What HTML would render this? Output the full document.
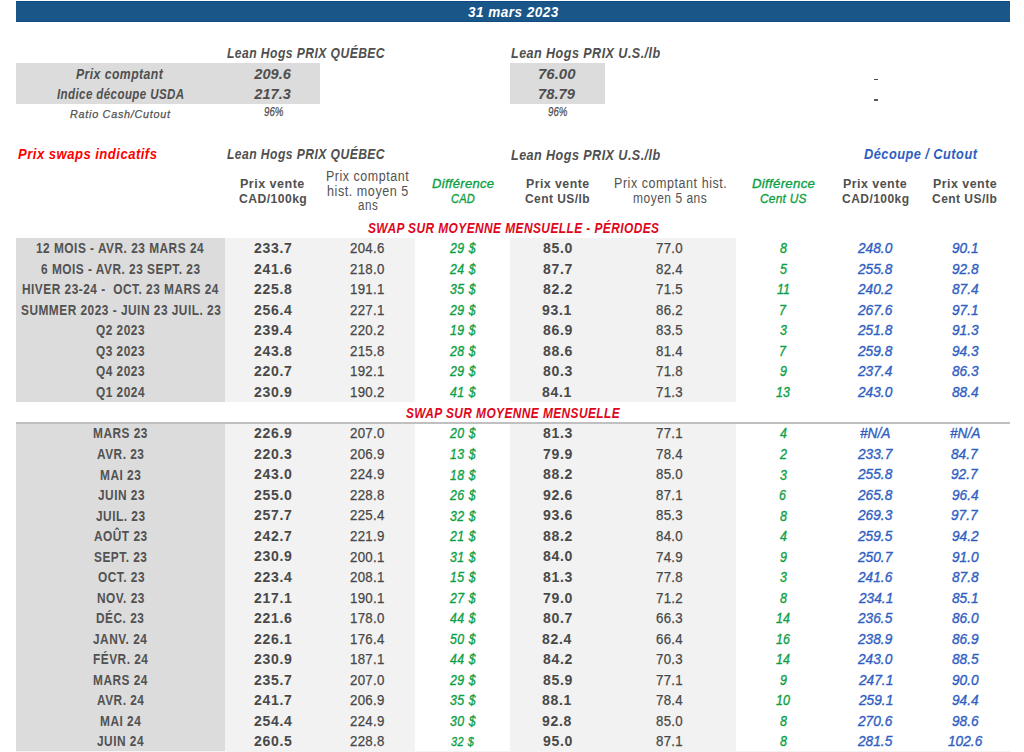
<!DOCTYPE html>
<html><head><meta charset="utf-8"><title>Prix swaps indicatifs</title>
<style>
html,body{margin:0;padding:0;background:#fff;width:1024px;height:752px;overflow:hidden;position:relative}
.r{position:absolute}
.t{position:absolute;white-space:nowrap;line-height:20px;font-family:"Liberation Sans", sans-serif;transform-origin:0 50%}
</style></head><body>
<div class="r" style="left:16px;top:1px;width:994.00px;height:21.00px;background:#1b5688"></div>
<div class="r" style="left:16px;top:1px;width:994.00px;height:1.20px;background:#0b4a82"></div>
<div class="r" style="left:16px;top:20.8px;width:994.00px;height:1.20px;background:#104c84"></div>
<div class="r" style="left:16px;top:63.2px;width:304.00px;height:40.40px;background:#dcdcdc"></div>
<div class="r" style="left:510px;top:63.2px;width:95.00px;height:40.40px;background:#dcdcdc"></div>
<div class="r" style="left:873.6px;top:79px;width:4.00px;height:1.30px;background:#4a4a4a"></div>
<div class="r" style="left:873.6px;top:99.4px;width:4.00px;height:1.30px;background:#5a5a5a"></div>
<div class="r" style="left:16px;top:237.7px;width:209.00px;height:164.00px;background:#dcdcdc"></div>
<div class="r" style="left:225px;top:237.7px;width:190.00px;height:164.00px;background:#f2f2f2"></div>
<div class="r" style="left:510px;top:237.7px;width:225.70px;height:164.00px;background:#f2f2f2"></div>
<div class="r" style="left:16px;top:422.1px;width:209.00px;height:328.60px;background:#dcdcdc"></div>
<div class="r" style="left:225px;top:422.1px;width:190.00px;height:328.60px;background:#f2f2f2"></div>
<div class="r" style="left:510px;top:422.1px;width:225.70px;height:328.60px;background:#f2f2f2"></div>
<div class="r" style="left:16px;top:422.1px;width:994.00px;height:1.50px;background:#c0c0c0"></div>
<div class="r" style="left:16px;top:750.7px;width:994.00px;height:1.30px;background:#f3f3f3"></div>
<div class="t" style="left:467.60px;top:2.24px;font-size:14.6px;color:#ffffff;font-weight:700;font-style:italic;letter-spacing:0.5px;transform:scaleX(0.9289);">31 mars 2023</div>
<div class="t" style="left:226.70px;top:43.25px;font-size:14.0px;color:#4f4f4f;font-weight:700;font-style:italic;letter-spacing:0.5px;transform:scaleX(0.8665);">Lean Hogs PRIX QUÉBEC</div>
<div class="t" style="left:511.30px;top:43.25px;font-size:14.0px;color:#4f4f4f;font-weight:700;font-style:italic;letter-spacing:0.5px;transform:scaleX(0.8982);">Lean Hogs PRIX U.S./lb</div>
<div class="t" style="left:76.00px;top:63.88px;font-size:14.2px;color:#4f4f4f;font-weight:700;font-style:italic;letter-spacing:0.5px;transform:scaleX(0.8627);">Prix comptant</div>
<div class="t" style="left:57.00px;top:84.28px;font-size:14.2px;color:#4f4f4f;font-weight:700;font-style:italic;letter-spacing:0.5px;transform:scaleX(0.8125);">Indice découpe USDA</div>
<div class="t" style="left:254.30px;top:63.94px;font-size:14.6px;color:#4f4f4f;font-weight:700;font-style:italic;">209.6</div>
<div class="t" style="left:254.30px;top:84.34px;font-size:14.6px;color:#4f4f4f;font-weight:700;font-style:italic;">217.3</div>
<div class="t" style="left:537.97px;top:63.94px;font-size:14.6px;color:#4f4f4f;font-weight:700;font-style:italic;transform:scaleX(1.0278);">76.00</div>
<div class="t" style="left:538.49px;top:84.34px;font-size:14.6px;color:#4f4f4f;font-weight:700;font-style:italic;transform:scaleX(1.0139);">78.79</div>
<div class="t" style="left:70.00px;top:103.71px;font-size:11.8px;color:#4f4f4f;font-style:italic;-webkit-text-stroke:0.25px #4f4f4f;letter-spacing:0.8px;transform:scaleX(0.9155);">Ratio Cash/Cutout</div>
<div class="t" style="left:263.70px;top:101.90px;font-size:13.0px;color:#4f4f4f;font-style:italic;-webkit-text-stroke:0.25px #4f4f4f;transform:scaleX(0.7500);">96%</div>
<div class="t" style="left:548.30px;top:101.90px;font-size:13.0px;color:#4f4f4f;font-style:italic;-webkit-text-stroke:0.25px #4f4f4f;transform:scaleX(0.7462);">96%</div>
<div class="t" style="left:17.50px;top:144.35px;font-size:14.0px;color:#ff0000;font-weight:700;font-style:italic;letter-spacing:0.5px;transform:scaleX(0.9358);">Prix swaps indicatifs</div>
<div class="t" style="left:226.70px;top:144.45px;font-size:14.0px;color:#4f4f4f;font-weight:700;font-style:italic;letter-spacing:0.5px;transform:scaleX(0.8665);">Lean Hogs PRIX QUÉBEC</div>
<div class="t" style="left:511.30px;top:144.65px;font-size:14.0px;color:#4f4f4f;font-weight:700;font-style:italic;letter-spacing:0.5px;transform:scaleX(0.8982);">Lean Hogs PRIX U.S./lb</div>
<div class="t" style="left:863.50px;top:144.25px;font-size:14.0px;color:#2f5ec2;font-weight:700;font-style:italic;letter-spacing:0.5px;transform:scaleX(0.9153);">Découpe / Cutout</div>
<div class="t" style="left:240.47px;top:174.19px;font-size:13.6px;color:#505050;font-weight:700;letter-spacing:0.5px;transform:scaleX(0.9250);">Prix vente</div>
<div class="t" style="left:239.20px;top:188.89px;font-size:13.6px;color:#505050;font-weight:700;letter-spacing:0.5px;transform:scaleX(0.8947);">CAD/100kg</div>
<div class="t" style="left:325.50px;top:167.22px;font-size:13.8px;color:#525252;letter-spacing:0.6px;transform:scaleX(0.9022);">Prix comptant</div>
<div class="t" style="left:326.59px;top:181.82px;font-size:13.8px;color:#525252;letter-spacing:0.6px;transform:scaleX(0.9114);">hist. moyen 5</div>
<div class="t" style="left:358.10px;top:196.22px;font-size:13.8px;color:#525252;letter-spacing:0.6px;transform:scaleX(0.8391);">ans</div>
<div class="t" style="left:431.70px;top:173.99px;font-size:13.6px;color:#0ca044;font-style:italic;-webkit-text-stroke:0.35px #0ca044;letter-spacing:0.3px;transform:scaleX(0.9609);">Différence</div>
<div class="t" style="left:450.70px;top:189.19px;font-size:13.6px;color:#0ca044;font-style:italic;-webkit-text-stroke:0.35px #0ca044;letter-spacing:0.3px;transform:scaleX(0.8103);">CAD</div>
<div class="t" style="left:525.69px;top:174.19px;font-size:13.6px;color:#505050;font-weight:700;letter-spacing:0.5px;transform:scaleX(0.9074);">Prix vente</div>
<div class="t" style="left:525.30px;top:188.89px;font-size:13.6px;color:#505050;font-weight:700;letter-spacing:0.5px;transform:scaleX(0.8808);">Cent US/lb</div>
<div class="t" style="left:613.79px;top:174.12px;font-size:13.8px;color:#525252;letter-spacing:0.6px;transform:scaleX(0.9074);">Prix comptant hist.</div>
<div class="t" style="left:633.13px;top:188.82px;font-size:13.8px;color:#525252;letter-spacing:0.6px;transform:scaleX(0.8679);">moyen 5 ans</div>
<div class="t" style="left:752.00px;top:173.99px;font-size:13.6px;color:#0ca044;font-style:italic;-webkit-text-stroke:0.35px #0ca044;letter-spacing:0.3px;transform:scaleX(0.9734);">Différence</div>
<div class="t" style="left:760.20px;top:189.19px;font-size:13.6px;color:#0ca044;font-style:italic;-webkit-text-stroke:0.35px #0ca044;letter-spacing:0.3px;transform:scaleX(0.8755);">Cent US</div>
<div class="t" style="left:843.48px;top:174.19px;font-size:13.6px;color:#505050;font-weight:700;letter-spacing:0.5px;transform:scaleX(0.9162);">Prix vente</div>
<div class="t" style="left:842.20px;top:188.89px;font-size:13.6px;color:#505050;font-weight:700;letter-spacing:0.5px;transform:scaleX(0.8853);">CAD/100kg</div>
<div class="t" style="left:932.88px;top:174.19px;font-size:13.6px;color:#505050;font-weight:700;letter-spacing:0.5px;transform:scaleX(0.9162);">Prix vente</div>
<div class="t" style="left:932.40px;top:188.89px;font-size:13.6px;color:#505050;font-weight:700;letter-spacing:0.5px;transform:scaleX(0.8849);">Cent US/lb</div>
<div class="t" style="left:367.50px;top:217.95px;font-size:14.0px;color:#e0061c;font-weight:700;font-style:italic;letter-spacing:0.5px;transform:scaleX(0.8512);">SWAP SUR MOYENNE MENSUELLE - PÉRIODES</div>
<div class="t" style="left:36.07px;top:238.18px;font-size:14.2px;color:#525252;font-weight:700;letter-spacing:0.6px;transform:scaleX(0.8360);">12 MOIS - AVR. 23 MARS 24</div>
<div class="t" style="left:254.03px;top:238.04px;font-size:14.6px;color:#494949;font-weight:700;letter-spacing:0.7px;transform:scaleX(0.9627);">233.7</div>
<div class="t" style="left:350.45px;top:238.11px;font-size:14.4px;color:#474747;-webkit-text-stroke:0.25px #474747;letter-spacing:0.3px;transform:scaleX(0.9217);">204.6</div>
<div class="t" style="left:449.70px;top:238.18px;font-size:14.2px;color:#0ca044;font-style:italic;-webkit-text-stroke:0.35px #0ca044;letter-spacing:0.6px;transform:scaleX(0.8667);">29 $</div>
<div class="t" style="left:542.86px;top:238.04px;font-size:14.6px;color:#494949;font-weight:700;letter-spacing:0.7px;transform:scaleX(0.9627);">85.0</div>
<div class="t" style="left:656.44px;top:238.11px;font-size:14.4px;color:#474747;-webkit-text-stroke:0.25px #474747;letter-spacing:0.3px;transform:scaleX(0.9217);">77.0</div>
<div class="t" style="left:779.69px;top:238.18px;font-size:14.2px;color:#0ca044;font-style:italic;-webkit-text-stroke:0.35px #0ca044;transform:scaleX(0.8781);">8</div>
<div class="t" style="left:858.38px;top:238.11px;font-size:14.4px;color:#2f5ec2;font-style:italic;-webkit-text-stroke:0.35px #2f5ec2;transform:scaleX(0.9513);">248.0</div>
<div class="t" style="left:952.36px;top:238.11px;font-size:14.4px;color:#2f5ec2;font-style:italic;-webkit-text-stroke:0.35px #2f5ec2;transform:scaleX(0.9513);">90.1</div>
<div class="t" style="left:41.08px;top:258.70px;font-size:14.2px;color:#525252;font-weight:700;letter-spacing:0.6px;transform:scaleX(0.8360);">6 MOIS - AVR. 23 SEPT. 23</div>
<div class="t" style="left:254.03px;top:258.56px;font-size:14.6px;color:#494949;font-weight:700;letter-spacing:0.7px;transform:scaleX(0.9627);">241.6</div>
<div class="t" style="left:350.45px;top:258.63px;font-size:14.4px;color:#474747;-webkit-text-stroke:0.25px #474747;letter-spacing:0.3px;transform:scaleX(0.9217);">218.0</div>
<div class="t" style="left:449.70px;top:258.70px;font-size:14.2px;color:#0ca044;font-style:italic;-webkit-text-stroke:0.35px #0ca044;letter-spacing:0.6px;transform:scaleX(0.8667);">24 $</div>
<div class="t" style="left:542.86px;top:258.56px;font-size:14.6px;color:#494949;font-weight:700;letter-spacing:0.7px;transform:scaleX(0.9627);">87.7</div>
<div class="t" style="left:656.44px;top:258.63px;font-size:14.4px;color:#474747;-webkit-text-stroke:0.25px #474747;letter-spacing:0.3px;transform:scaleX(0.9217);">82.4</div>
<div class="t" style="left:779.69px;top:258.70px;font-size:14.2px;color:#0ca044;font-style:italic;-webkit-text-stroke:0.35px #0ca044;transform:scaleX(0.8781);">5</div>
<div class="t" style="left:858.38px;top:258.63px;font-size:14.4px;color:#2f5ec2;font-style:italic;-webkit-text-stroke:0.35px #2f5ec2;transform:scaleX(0.9513);">255.8</div>
<div class="t" style="left:951.88px;top:258.63px;font-size:14.4px;color:#2f5ec2;font-style:italic;-webkit-text-stroke:0.35px #2f5ec2;transform:scaleX(0.9513);">92.8</div>
<div class="t" style="left:21.86px;top:279.22px;font-size:14.2px;color:#525252;font-weight:700;letter-spacing:0.6px;transform:scaleX(0.8360);">HIVER 23-24 -&nbsp; OCT. 23 MARS 24</div>
<div class="t" style="left:254.03px;top:279.08px;font-size:14.6px;color:#494949;font-weight:700;letter-spacing:0.7px;transform:scaleX(0.9627);">225.8</div>
<div class="t" style="left:349.99px;top:279.15px;font-size:14.4px;color:#474747;-webkit-text-stroke:0.25px #474747;letter-spacing:0.3px;transform:scaleX(0.9217);">191.1</div>
<div class="t" style="left:449.70px;top:279.22px;font-size:14.2px;color:#0ca044;font-style:italic;-webkit-text-stroke:0.35px #0ca044;letter-spacing:0.6px;transform:scaleX(0.8667);">35 $</div>
<div class="t" style="left:542.86px;top:279.08px;font-size:14.6px;color:#494949;font-weight:700;letter-spacing:0.7px;transform:scaleX(0.9627);">82.2</div>
<div class="t" style="left:656.44px;top:279.15px;font-size:14.4px;color:#474747;-webkit-text-stroke:0.25px #474747;letter-spacing:0.3px;transform:scaleX(0.9217);">71.5</div>
<div class="t" style="left:777.05px;top:279.22px;font-size:14.2px;color:#0ca044;font-style:italic;-webkit-text-stroke:0.35px #0ca044;transform:scaleX(0.8781);">11</div>
<div class="t" style="left:858.38px;top:279.15px;font-size:14.4px;color:#2f5ec2;font-style:italic;-webkit-text-stroke:0.35px #2f5ec2;transform:scaleX(0.9513);">240.2</div>
<div class="t" style="left:951.88px;top:279.15px;font-size:14.4px;color:#2f5ec2;font-style:italic;-webkit-text-stroke:0.35px #2f5ec2;transform:scaleX(0.9513);">87.4</div>
<div class="t" style="left:20.60px;top:299.74px;font-size:14.2px;color:#525252;font-weight:700;letter-spacing:0.6px;transform:scaleX(0.8360);">SUMMER 2023 - JUIN 23 JUIL. 23</div>
<div class="t" style="left:253.55px;top:299.60px;font-size:14.6px;color:#494949;font-weight:700;letter-spacing:0.7px;transform:scaleX(0.9627);">256.4</div>
<div class="t" style="left:350.45px;top:299.67px;font-size:14.4px;color:#474747;-webkit-text-stroke:0.25px #474747;letter-spacing:0.3px;transform:scaleX(0.9217);">227.1</div>
<div class="t" style="left:449.70px;top:299.74px;font-size:14.2px;color:#0ca044;font-style:italic;-webkit-text-stroke:0.35px #0ca044;letter-spacing:0.6px;transform:scaleX(0.8667);">29 $</div>
<div class="t" style="left:542.38px;top:299.60px;font-size:14.6px;color:#494949;font-weight:700;letter-spacing:0.7px;transform:scaleX(0.9627);">93.1</div>
<div class="t" style="left:656.44px;top:299.67px;font-size:14.4px;color:#474747;-webkit-text-stroke:0.25px #474747;letter-spacing:0.3px;transform:scaleX(0.9217);">86.2</div>
<div class="t" style="left:778.81px;top:299.74px;font-size:14.2px;color:#0ca044;font-style:italic;-webkit-text-stroke:0.35px #0ca044;transform:scaleX(0.8781);">7</div>
<div class="t" style="left:858.38px;top:299.67px;font-size:14.4px;color:#2f5ec2;font-style:italic;-webkit-text-stroke:0.35px #2f5ec2;transform:scaleX(0.9513);">267.6</div>
<div class="t" style="left:952.36px;top:299.67px;font-size:14.4px;color:#2f5ec2;font-style:italic;-webkit-text-stroke:0.35px #2f5ec2;transform:scaleX(0.9513);">97.1</div>
<div class="t" style="left:96.26px;top:320.26px;font-size:14.2px;color:#525252;font-weight:700;letter-spacing:0.6px;transform:scaleX(0.8360);">Q2 2023</div>
<div class="t" style="left:253.55px;top:320.12px;font-size:14.6px;color:#494949;font-weight:700;letter-spacing:0.7px;transform:scaleX(0.9627);">239.4</div>
<div class="t" style="left:350.45px;top:320.19px;font-size:14.4px;color:#474747;-webkit-text-stroke:0.25px #474747;letter-spacing:0.3px;transform:scaleX(0.9217);">220.2</div>
<div class="t" style="left:449.70px;top:320.26px;font-size:14.2px;color:#0ca044;font-style:italic;-webkit-text-stroke:0.35px #0ca044;letter-spacing:0.6px;transform:scaleX(0.8667);">19 $</div>
<div class="t" style="left:542.86px;top:320.12px;font-size:14.6px;color:#494949;font-weight:700;letter-spacing:0.7px;transform:scaleX(0.9627);">86.9</div>
<div class="t" style="left:656.44px;top:320.19px;font-size:14.4px;color:#474747;-webkit-text-stroke:0.25px #474747;letter-spacing:0.3px;transform:scaleX(0.9217);">83.5</div>
<div class="t" style="left:779.69px;top:320.26px;font-size:14.2px;color:#0ca044;font-style:italic;-webkit-text-stroke:0.35px #0ca044;transform:scaleX(0.8781);">3</div>
<div class="t" style="left:858.38px;top:320.19px;font-size:14.4px;color:#2f5ec2;font-style:italic;-webkit-text-stroke:0.35px #2f5ec2;transform:scaleX(0.9513);">251.8</div>
<div class="t" style="left:951.88px;top:320.19px;font-size:14.4px;color:#2f5ec2;font-style:italic;-webkit-text-stroke:0.35px #2f5ec2;transform:scaleX(0.9513);">91.3</div>
<div class="t" style="left:96.26px;top:340.78px;font-size:14.2px;color:#525252;font-weight:700;letter-spacing:0.6px;transform:scaleX(0.8360);">Q3 2023</div>
<div class="t" style="left:254.03px;top:340.64px;font-size:14.6px;color:#494949;font-weight:700;letter-spacing:0.7px;transform:scaleX(0.9627);">243.8</div>
<div class="t" style="left:350.45px;top:340.71px;font-size:14.4px;color:#474747;-webkit-text-stroke:0.25px #474747;letter-spacing:0.3px;transform:scaleX(0.9217);">215.8</div>
<div class="t" style="left:449.70px;top:340.78px;font-size:14.2px;color:#0ca044;font-style:italic;-webkit-text-stroke:0.35px #0ca044;letter-spacing:0.6px;transform:scaleX(0.8667);">28 $</div>
<div class="t" style="left:542.86px;top:340.64px;font-size:14.6px;color:#494949;font-weight:700;letter-spacing:0.7px;transform:scaleX(0.9627);">88.6</div>
<div class="t" style="left:656.44px;top:340.71px;font-size:14.4px;color:#474747;-webkit-text-stroke:0.25px #474747;letter-spacing:0.3px;transform:scaleX(0.9217);">81.4</div>
<div class="t" style="left:778.81px;top:340.78px;font-size:14.2px;color:#0ca044;font-style:italic;-webkit-text-stroke:0.35px #0ca044;transform:scaleX(0.8781);">7</div>
<div class="t" style="left:858.38px;top:340.71px;font-size:14.4px;color:#2f5ec2;font-style:italic;-webkit-text-stroke:0.35px #2f5ec2;transform:scaleX(0.9513);">259.8</div>
<div class="t" style="left:951.88px;top:340.71px;font-size:14.4px;color:#2f5ec2;font-style:italic;-webkit-text-stroke:0.35px #2f5ec2;transform:scaleX(0.9513);">94.3</div>
<div class="t" style="left:96.26px;top:361.30px;font-size:14.2px;color:#525252;font-weight:700;letter-spacing:0.6px;transform:scaleX(0.8360);">Q4 2023</div>
<div class="t" style="left:254.03px;top:361.16px;font-size:14.6px;color:#494949;font-weight:700;letter-spacing:0.7px;transform:scaleX(0.9627);">220.7</div>
<div class="t" style="left:349.99px;top:361.23px;font-size:14.4px;color:#474747;-webkit-text-stroke:0.25px #474747;letter-spacing:0.3px;transform:scaleX(0.9217);">192.1</div>
<div class="t" style="left:449.70px;top:361.30px;font-size:14.2px;color:#0ca044;font-style:italic;-webkit-text-stroke:0.35px #0ca044;letter-spacing:0.6px;transform:scaleX(0.8667);">29 $</div>
<div class="t" style="left:542.86px;top:361.16px;font-size:14.6px;color:#494949;font-weight:700;letter-spacing:0.7px;transform:scaleX(0.9627);">80.3</div>
<div class="t" style="left:656.44px;top:361.23px;font-size:14.4px;color:#474747;-webkit-text-stroke:0.25px #474747;letter-spacing:0.3px;transform:scaleX(0.9217);">71.8</div>
<div class="t" style="left:779.69px;top:361.30px;font-size:14.2px;color:#0ca044;font-style:italic;-webkit-text-stroke:0.35px #0ca044;transform:scaleX(0.8781);">9</div>
<div class="t" style="left:858.38px;top:361.23px;font-size:14.4px;color:#2f5ec2;font-style:italic;-webkit-text-stroke:0.35px #2f5ec2;transform:scaleX(0.9513);">237.4</div>
<div class="t" style="left:951.88px;top:361.23px;font-size:14.4px;color:#2f5ec2;font-style:italic;-webkit-text-stroke:0.35px #2f5ec2;transform:scaleX(0.9513);">86.3</div>
<div class="t" style="left:96.26px;top:381.82px;font-size:14.2px;color:#525252;font-weight:700;letter-spacing:0.6px;transform:scaleX(0.8360);">Q1 2024</div>
<div class="t" style="left:254.03px;top:381.68px;font-size:14.6px;color:#494949;font-weight:700;letter-spacing:0.7px;transform:scaleX(0.9627);">230.9</div>
<div class="t" style="left:349.99px;top:381.75px;font-size:14.4px;color:#474747;-webkit-text-stroke:0.25px #474747;letter-spacing:0.3px;transform:scaleX(0.9217);">190.2</div>
<div class="t" style="left:449.70px;top:381.82px;font-size:14.2px;color:#0ca044;font-style:italic;-webkit-text-stroke:0.35px #0ca044;letter-spacing:0.6px;transform:scaleX(0.8667);">41 $</div>
<div class="t" style="left:542.38px;top:381.68px;font-size:14.6px;color:#494949;font-weight:700;letter-spacing:0.7px;transform:scaleX(0.9627);">84.1</div>
<div class="t" style="left:656.44px;top:381.75px;font-size:14.4px;color:#474747;-webkit-text-stroke:0.25px #474747;letter-spacing:0.3px;transform:scaleX(0.9217);">71.3</div>
<div class="t" style="left:776.18px;top:381.82px;font-size:14.2px;color:#0ca044;font-style:italic;-webkit-text-stroke:0.35px #0ca044;transform:scaleX(0.8781);">13</div>
<div class="t" style="left:858.38px;top:381.75px;font-size:14.4px;color:#2f5ec2;font-style:italic;-webkit-text-stroke:0.35px #2f5ec2;transform:scaleX(0.9513);">243.0</div>
<div class="t" style="left:951.88px;top:381.75px;font-size:14.4px;color:#2f5ec2;font-style:italic;-webkit-text-stroke:0.35px #2f5ec2;transform:scaleX(0.9513);">88.4</div>
<div class="t" style="left:406.00px;top:402.95px;font-size:14.0px;color:#e0061c;font-weight:700;font-style:italic;letter-spacing:0.5px;transform:scaleX(0.8492);">SWAP SUR MOYENNE MENSUELLE</div>
<div class="t" style="left:92.91px;top:423.48px;font-size:14.2px;color:#525252;font-weight:700;letter-spacing:0.6px;transform:scaleX(0.8360);">MARS 23</div>
<div class="t" style="left:254.03px;top:423.34px;font-size:14.6px;color:#494949;font-weight:700;letter-spacing:0.7px;transform:scaleX(0.9627);">226.9</div>
<div class="t" style="left:350.45px;top:423.41px;font-size:14.4px;color:#474747;-webkit-text-stroke:0.25px #474747;letter-spacing:0.3px;transform:scaleX(0.9217);">207.0</div>
<div class="t" style="left:449.70px;top:423.48px;font-size:14.2px;color:#0ca044;font-style:italic;-webkit-text-stroke:0.35px #0ca044;letter-spacing:0.6px;transform:scaleX(0.8667);">20 $</div>
<div class="t" style="left:542.86px;top:423.34px;font-size:14.6px;color:#494949;font-weight:700;letter-spacing:0.7px;transform:scaleX(0.9627);">81.3</div>
<div class="t" style="left:656.44px;top:423.41px;font-size:14.4px;color:#474747;-webkit-text-stroke:0.25px #474747;letter-spacing:0.3px;transform:scaleX(0.9217);">77.1</div>
<div class="t" style="left:779.69px;top:423.48px;font-size:14.2px;color:#0ca044;font-style:italic;-webkit-text-stroke:0.35px #0ca044;transform:scaleX(0.8781);">4</div>
<div class="t" style="left:860.28px;top:423.41px;font-size:14.4px;color:#2f5ec2;font-style:italic;-webkit-text-stroke:0.35px #2f5ec2;transform:scaleX(0.9513);">#N/A</div>
<div class="t" style="left:949.98px;top:423.41px;font-size:14.4px;color:#2f5ec2;font-style:italic;-webkit-text-stroke:0.35px #2f5ec2;transform:scaleX(0.9513);">#N/A</div>
<div class="t" style="left:97.09px;top:444.00px;font-size:14.2px;color:#525252;font-weight:700;letter-spacing:0.6px;transform:scaleX(0.8360);">AVR. 23</div>
<div class="t" style="left:254.03px;top:443.86px;font-size:14.6px;color:#494949;font-weight:700;letter-spacing:0.7px;transform:scaleX(0.9627);">220.3</div>
<div class="t" style="left:350.45px;top:443.93px;font-size:14.4px;color:#474747;-webkit-text-stroke:0.25px #474747;letter-spacing:0.3px;transform:scaleX(0.9217);">206.9</div>
<div class="t" style="left:449.70px;top:444.00px;font-size:14.2px;color:#0ca044;font-style:italic;-webkit-text-stroke:0.35px #0ca044;letter-spacing:0.6px;transform:scaleX(0.8667);">13 $</div>
<div class="t" style="left:542.86px;top:443.86px;font-size:14.6px;color:#494949;font-weight:700;letter-spacing:0.7px;transform:scaleX(0.9627);">79.9</div>
<div class="t" style="left:656.44px;top:443.93px;font-size:14.4px;color:#474747;-webkit-text-stroke:0.25px #474747;letter-spacing:0.3px;transform:scaleX(0.9217);">78.4</div>
<div class="t" style="left:779.69px;top:444.00px;font-size:14.2px;color:#0ca044;font-style:italic;-webkit-text-stroke:0.35px #0ca044;transform:scaleX(0.8781);">2</div>
<div class="t" style="left:857.90px;top:443.93px;font-size:14.4px;color:#2f5ec2;font-style:italic;-webkit-text-stroke:0.35px #2f5ec2;transform:scaleX(0.9513);">233.7</div>
<div class="t" style="left:951.41px;top:443.93px;font-size:14.4px;color:#2f5ec2;font-style:italic;-webkit-text-stroke:0.35px #2f5ec2;transform:scaleX(0.9513);">84.7</div>
<div class="t" style="left:100.02px;top:464.52px;font-size:14.2px;color:#525252;font-weight:700;letter-spacing:0.6px;transform:scaleX(0.8360);">MAI 23</div>
<div class="t" style="left:254.03px;top:464.38px;font-size:14.6px;color:#494949;font-weight:700;letter-spacing:0.7px;transform:scaleX(0.9627);">243.0</div>
<div class="t" style="left:350.45px;top:464.45px;font-size:14.4px;color:#474747;-webkit-text-stroke:0.25px #474747;letter-spacing:0.3px;transform:scaleX(0.9217);">224.9</div>
<div class="t" style="left:449.70px;top:464.52px;font-size:14.2px;color:#0ca044;font-style:italic;-webkit-text-stroke:0.35px #0ca044;letter-spacing:0.6px;transform:scaleX(0.8667);">18 $</div>
<div class="t" style="left:542.86px;top:464.38px;font-size:14.6px;color:#494949;font-weight:700;letter-spacing:0.7px;transform:scaleX(0.9627);">88.2</div>
<div class="t" style="left:656.44px;top:464.45px;font-size:14.4px;color:#474747;-webkit-text-stroke:0.25px #474747;letter-spacing:0.3px;transform:scaleX(0.9217);">85.0</div>
<div class="t" style="left:779.69px;top:464.52px;font-size:14.2px;color:#0ca044;font-style:italic;-webkit-text-stroke:0.35px #0ca044;transform:scaleX(0.8781);">3</div>
<div class="t" style="left:858.38px;top:464.45px;font-size:14.4px;color:#2f5ec2;font-style:italic;-webkit-text-stroke:0.35px #2f5ec2;transform:scaleX(0.9513);">255.8</div>
<div class="t" style="left:951.41px;top:464.45px;font-size:14.4px;color:#2f5ec2;font-style:italic;-webkit-text-stroke:0.35px #2f5ec2;transform:scaleX(0.9513);">92.7</div>
<div class="t" style="left:97.51px;top:485.04px;font-size:14.2px;color:#525252;font-weight:700;letter-spacing:0.6px;transform:scaleX(0.8360);">JUIN 23</div>
<div class="t" style="left:254.03px;top:484.90px;font-size:14.6px;color:#494949;font-weight:700;letter-spacing:0.7px;transform:scaleX(0.9627);">255.0</div>
<div class="t" style="left:350.45px;top:484.97px;font-size:14.4px;color:#474747;-webkit-text-stroke:0.25px #474747;letter-spacing:0.3px;transform:scaleX(0.9217);">228.8</div>
<div class="t" style="left:449.70px;top:485.04px;font-size:14.2px;color:#0ca044;font-style:italic;-webkit-text-stroke:0.35px #0ca044;letter-spacing:0.6px;transform:scaleX(0.8667);">26 $</div>
<div class="t" style="left:542.86px;top:484.90px;font-size:14.6px;color:#494949;font-weight:700;letter-spacing:0.7px;transform:scaleX(0.9627);">92.6</div>
<div class="t" style="left:656.44px;top:484.97px;font-size:14.4px;color:#474747;-webkit-text-stroke:0.25px #474747;letter-spacing:0.3px;transform:scaleX(0.9217);">87.1</div>
<div class="t" style="left:779.25px;top:485.04px;font-size:14.2px;color:#0ca044;font-style:italic;-webkit-text-stroke:0.35px #0ca044;transform:scaleX(0.8781);">6</div>
<div class="t" style="left:858.38px;top:484.97px;font-size:14.4px;color:#2f5ec2;font-style:italic;-webkit-text-stroke:0.35px #2f5ec2;transform:scaleX(0.9513);">265.8</div>
<div class="t" style="left:951.88px;top:484.97px;font-size:14.4px;color:#2f5ec2;font-style:italic;-webkit-text-stroke:0.35px #2f5ec2;transform:scaleX(0.9513);">96.4</div>
<div class="t" style="left:96.26px;top:505.56px;font-size:14.2px;color:#525252;font-weight:700;letter-spacing:0.6px;transform:scaleX(0.8360);">JUIL. 23</div>
<div class="t" style="left:254.03px;top:505.42px;font-size:14.6px;color:#494949;font-weight:700;letter-spacing:0.7px;transform:scaleX(0.9627);">257.7</div>
<div class="t" style="left:350.45px;top:505.49px;font-size:14.4px;color:#474747;-webkit-text-stroke:0.25px #474747;letter-spacing:0.3px;transform:scaleX(0.9217);">225.4</div>
<div class="t" style="left:449.70px;top:505.56px;font-size:14.2px;color:#0ca044;font-style:italic;-webkit-text-stroke:0.35px #0ca044;letter-spacing:0.6px;transform:scaleX(0.8667);">32 $</div>
<div class="t" style="left:542.86px;top:505.42px;font-size:14.6px;color:#494949;font-weight:700;letter-spacing:0.7px;transform:scaleX(0.9627);">93.6</div>
<div class="t" style="left:656.44px;top:505.49px;font-size:14.4px;color:#474747;-webkit-text-stroke:0.25px #474747;letter-spacing:0.3px;transform:scaleX(0.9217);">85.3</div>
<div class="t" style="left:779.69px;top:505.56px;font-size:14.2px;color:#0ca044;font-style:italic;-webkit-text-stroke:0.35px #0ca044;transform:scaleX(0.8781);">8</div>
<div class="t" style="left:858.38px;top:505.49px;font-size:14.4px;color:#2f5ec2;font-style:italic;-webkit-text-stroke:0.35px #2f5ec2;transform:scaleX(0.9513);">269.3</div>
<div class="t" style="left:951.41px;top:505.49px;font-size:14.4px;color:#2f5ec2;font-style:italic;-webkit-text-stroke:0.35px #2f5ec2;transform:scaleX(0.9513);">97.7</div>
<div class="t" style="left:94.17px;top:526.08px;font-size:14.2px;color:#525252;font-weight:700;letter-spacing:0.6px;transform:scaleX(0.8360);">AOÛT 23</div>
<div class="t" style="left:254.03px;top:525.94px;font-size:14.6px;color:#494949;font-weight:700;letter-spacing:0.7px;transform:scaleX(0.9627);">242.7</div>
<div class="t" style="left:350.45px;top:526.01px;font-size:14.4px;color:#474747;-webkit-text-stroke:0.25px #474747;letter-spacing:0.3px;transform:scaleX(0.9217);">221.9</div>
<div class="t" style="left:449.70px;top:526.08px;font-size:14.2px;color:#0ca044;font-style:italic;-webkit-text-stroke:0.35px #0ca044;letter-spacing:0.6px;transform:scaleX(0.8667);">21 $</div>
<div class="t" style="left:542.86px;top:525.94px;font-size:14.6px;color:#494949;font-weight:700;letter-spacing:0.7px;transform:scaleX(0.9627);">88.2</div>
<div class="t" style="left:656.44px;top:526.01px;font-size:14.4px;color:#474747;-webkit-text-stroke:0.25px #474747;letter-spacing:0.3px;transform:scaleX(0.9217);">84.0</div>
<div class="t" style="left:779.69px;top:526.08px;font-size:14.2px;color:#0ca044;font-style:italic;-webkit-text-stroke:0.35px #0ca044;transform:scaleX(0.8781);">4</div>
<div class="t" style="left:858.38px;top:526.01px;font-size:14.4px;color:#2f5ec2;font-style:italic;-webkit-text-stroke:0.35px #2f5ec2;transform:scaleX(0.9513);">259.5</div>
<div class="t" style="left:951.88px;top:526.01px;font-size:14.4px;color:#2f5ec2;font-style:italic;-webkit-text-stroke:0.35px #2f5ec2;transform:scaleX(0.9513);">94.2</div>
<div class="t" style="left:94.17px;top:546.60px;font-size:14.2px;color:#525252;font-weight:700;letter-spacing:0.6px;transform:scaleX(0.8360);">SEPT. 23</div>
<div class="t" style="left:254.03px;top:546.46px;font-size:14.6px;color:#494949;font-weight:700;letter-spacing:0.7px;transform:scaleX(0.9627);">230.9</div>
<div class="t" style="left:350.45px;top:546.53px;font-size:14.4px;color:#474747;-webkit-text-stroke:0.25px #474747;letter-spacing:0.3px;transform:scaleX(0.9217);">200.1</div>
<div class="t" style="left:449.70px;top:546.60px;font-size:14.2px;color:#0ca044;font-style:italic;-webkit-text-stroke:0.35px #0ca044;letter-spacing:0.6px;transform:scaleX(0.8667);">31 $</div>
<div class="t" style="left:542.86px;top:546.46px;font-size:14.6px;color:#494949;font-weight:700;letter-spacing:0.7px;transform:scaleX(0.9627);">84.0</div>
<div class="t" style="left:656.44px;top:546.53px;font-size:14.4px;color:#474747;-webkit-text-stroke:0.25px #474747;letter-spacing:0.3px;transform:scaleX(0.9217);">74.9</div>
<div class="t" style="left:779.69px;top:546.60px;font-size:14.2px;color:#0ca044;font-style:italic;-webkit-text-stroke:0.35px #0ca044;transform:scaleX(0.8781);">9</div>
<div class="t" style="left:857.90px;top:546.53px;font-size:14.4px;color:#2f5ec2;font-style:italic;-webkit-text-stroke:0.35px #2f5ec2;transform:scaleX(0.9513);">250.7</div>
<div class="t" style="left:951.88px;top:546.53px;font-size:14.4px;color:#2f5ec2;font-style:italic;-webkit-text-stroke:0.35px #2f5ec2;transform:scaleX(0.9513);">91.0</div>
<div class="t" style="left:97.51px;top:567.12px;font-size:14.2px;color:#525252;font-weight:700;letter-spacing:0.6px;transform:scaleX(0.8360);">OCT. 23</div>
<div class="t" style="left:253.55px;top:566.98px;font-size:14.6px;color:#494949;font-weight:700;letter-spacing:0.7px;transform:scaleX(0.9627);">223.4</div>
<div class="t" style="left:350.45px;top:567.05px;font-size:14.4px;color:#474747;-webkit-text-stroke:0.25px #474747;letter-spacing:0.3px;transform:scaleX(0.9217);">208.1</div>
<div class="t" style="left:449.70px;top:567.12px;font-size:14.2px;color:#0ca044;font-style:italic;-webkit-text-stroke:0.35px #0ca044;letter-spacing:0.6px;transform:scaleX(0.8667);">15 $</div>
<div class="t" style="left:542.86px;top:566.98px;font-size:14.6px;color:#494949;font-weight:700;letter-spacing:0.7px;transform:scaleX(0.9627);">81.3</div>
<div class="t" style="left:656.44px;top:567.05px;font-size:14.4px;color:#474747;-webkit-text-stroke:0.25px #474747;letter-spacing:0.3px;transform:scaleX(0.9217);">77.8</div>
<div class="t" style="left:779.69px;top:567.12px;font-size:14.2px;color:#0ca044;font-style:italic;-webkit-text-stroke:0.35px #0ca044;transform:scaleX(0.8781);">3</div>
<div class="t" style="left:858.38px;top:567.05px;font-size:14.4px;color:#2f5ec2;font-style:italic;-webkit-text-stroke:0.35px #2f5ec2;transform:scaleX(0.9513);">241.6</div>
<div class="t" style="left:951.88px;top:567.05px;font-size:14.4px;color:#2f5ec2;font-style:italic;-webkit-text-stroke:0.35px #2f5ec2;transform:scaleX(0.9513);">87.8</div>
<div class="t" style="left:96.67px;top:587.64px;font-size:14.2px;color:#525252;font-weight:700;letter-spacing:0.6px;transform:scaleX(0.8360);">NOV. 23</div>
<div class="t" style="left:254.03px;top:587.50px;font-size:14.6px;color:#494949;font-weight:700;letter-spacing:0.7px;transform:scaleX(0.9627);">217.1</div>
<div class="t" style="left:349.99px;top:587.57px;font-size:14.4px;color:#474747;-webkit-text-stroke:0.25px #474747;letter-spacing:0.3px;transform:scaleX(0.9217);">190.1</div>
<div class="t" style="left:449.70px;top:587.64px;font-size:14.2px;color:#0ca044;font-style:italic;-webkit-text-stroke:0.35px #0ca044;letter-spacing:0.6px;transform:scaleX(0.8667);">27 $</div>
<div class="t" style="left:542.86px;top:587.50px;font-size:14.6px;color:#494949;font-weight:700;letter-spacing:0.7px;transform:scaleX(0.9627);">79.0</div>
<div class="t" style="left:656.44px;top:587.57px;font-size:14.4px;color:#474747;-webkit-text-stroke:0.25px #474747;letter-spacing:0.3px;transform:scaleX(0.9217);">71.2</div>
<div class="t" style="left:779.69px;top:587.64px;font-size:14.2px;color:#0ca044;font-style:italic;-webkit-text-stroke:0.35px #0ca044;transform:scaleX(0.8781);">8</div>
<div class="t" style="left:858.85px;top:587.57px;font-size:14.4px;color:#2f5ec2;font-style:italic;-webkit-text-stroke:0.35px #2f5ec2;transform:scaleX(0.9513);">234.1</div>
<div class="t" style="left:952.36px;top:587.57px;font-size:14.4px;color:#2f5ec2;font-style:italic;-webkit-text-stroke:0.35px #2f5ec2;transform:scaleX(0.9513);">85.1</div>
<div class="t" style="left:96.26px;top:608.16px;font-size:14.2px;color:#525252;font-weight:700;letter-spacing:0.6px;transform:scaleX(0.8360);">DÉC. 23</div>
<div class="t" style="left:254.03px;top:608.02px;font-size:14.6px;color:#494949;font-weight:700;letter-spacing:0.7px;transform:scaleX(0.9627);">221.6</div>
<div class="t" style="left:349.99px;top:608.09px;font-size:14.4px;color:#474747;-webkit-text-stroke:0.25px #474747;letter-spacing:0.3px;transform:scaleX(0.9217);">178.0</div>
<div class="t" style="left:449.70px;top:608.16px;font-size:14.2px;color:#0ca044;font-style:italic;-webkit-text-stroke:0.35px #0ca044;letter-spacing:0.6px;transform:scaleX(0.8667);">44 $</div>
<div class="t" style="left:542.86px;top:608.02px;font-size:14.6px;color:#494949;font-weight:700;letter-spacing:0.7px;transform:scaleX(0.9627);">80.7</div>
<div class="t" style="left:656.44px;top:608.09px;font-size:14.4px;color:#474747;-webkit-text-stroke:0.25px #474747;letter-spacing:0.3px;transform:scaleX(0.9217);">66.3</div>
<div class="t" style="left:776.18px;top:608.16px;font-size:14.2px;color:#0ca044;font-style:italic;-webkit-text-stroke:0.35px #0ca044;transform:scaleX(0.8781);">14</div>
<div class="t" style="left:858.38px;top:608.09px;font-size:14.4px;color:#2f5ec2;font-style:italic;-webkit-text-stroke:0.35px #2f5ec2;transform:scaleX(0.9513);">236.5</div>
<div class="t" style="left:951.88px;top:608.09px;font-size:14.4px;color:#2f5ec2;font-style:italic;-webkit-text-stroke:0.35px #2f5ec2;transform:scaleX(0.9513);">86.0</div>
<div class="t" style="left:93.33px;top:628.68px;font-size:14.2px;color:#525252;font-weight:700;letter-spacing:0.6px;transform:scaleX(0.8360);">JANV. 24</div>
<div class="t" style="left:254.03px;top:628.54px;font-size:14.6px;color:#494949;font-weight:700;letter-spacing:0.7px;transform:scaleX(0.9627);">226.1</div>
<div class="t" style="left:349.99px;top:628.61px;font-size:14.4px;color:#474747;-webkit-text-stroke:0.25px #474747;letter-spacing:0.3px;transform:scaleX(0.9217);">176.4</div>
<div class="t" style="left:449.70px;top:628.68px;font-size:14.2px;color:#0ca044;font-style:italic;-webkit-text-stroke:0.35px #0ca044;letter-spacing:0.6px;transform:scaleX(0.8667);">50 $</div>
<div class="t" style="left:542.38px;top:628.54px;font-size:14.6px;color:#494949;font-weight:700;letter-spacing:0.7px;transform:scaleX(0.9627);">82.4</div>
<div class="t" style="left:656.44px;top:628.61px;font-size:14.4px;color:#474747;-webkit-text-stroke:0.25px #474747;letter-spacing:0.3px;transform:scaleX(0.9217);">66.4</div>
<div class="t" style="left:776.18px;top:628.68px;font-size:14.2px;color:#0ca044;font-style:italic;-webkit-text-stroke:0.35px #0ca044;transform:scaleX(0.8781);">16</div>
<div class="t" style="left:858.38px;top:628.61px;font-size:14.4px;color:#2f5ec2;font-style:italic;-webkit-text-stroke:0.35px #2f5ec2;transform:scaleX(0.9513);">238.9</div>
<div class="t" style="left:951.88px;top:628.61px;font-size:14.4px;color:#2f5ec2;font-style:italic;-webkit-text-stroke:0.35px #2f5ec2;transform:scaleX(0.9513);">86.9</div>
<div class="t" style="left:92.50px;top:649.20px;font-size:14.2px;color:#525252;font-weight:700;letter-spacing:0.6px;transform:scaleX(0.8360);">FÉVR. 24</div>
<div class="t" style="left:254.03px;top:649.06px;font-size:14.6px;color:#494949;font-weight:700;letter-spacing:0.7px;transform:scaleX(0.9627);">230.9</div>
<div class="t" style="left:349.99px;top:649.13px;font-size:14.4px;color:#474747;-webkit-text-stroke:0.25px #474747;letter-spacing:0.3px;transform:scaleX(0.9217);">187.1</div>
<div class="t" style="left:449.70px;top:649.20px;font-size:14.2px;color:#0ca044;font-style:italic;-webkit-text-stroke:0.35px #0ca044;letter-spacing:0.6px;transform:scaleX(0.8667);">44 $</div>
<div class="t" style="left:542.86px;top:649.06px;font-size:14.6px;color:#494949;font-weight:700;letter-spacing:0.7px;transform:scaleX(0.9627);">84.2</div>
<div class="t" style="left:656.44px;top:649.13px;font-size:14.4px;color:#474747;-webkit-text-stroke:0.25px #474747;letter-spacing:0.3px;transform:scaleX(0.9217);">70.3</div>
<div class="t" style="left:776.18px;top:649.20px;font-size:14.2px;color:#0ca044;font-style:italic;-webkit-text-stroke:0.35px #0ca044;transform:scaleX(0.8781);">14</div>
<div class="t" style="left:858.38px;top:649.13px;font-size:14.4px;color:#2f5ec2;font-style:italic;-webkit-text-stroke:0.35px #2f5ec2;transform:scaleX(0.9513);">243.0</div>
<div class="t" style="left:951.88px;top:649.13px;font-size:14.4px;color:#2f5ec2;font-style:italic;-webkit-text-stroke:0.35px #2f5ec2;transform:scaleX(0.9513);">88.5</div>
<div class="t" style="left:92.91px;top:669.72px;font-size:14.2px;color:#525252;font-weight:700;letter-spacing:0.6px;transform:scaleX(0.8360);">MARS 24</div>
<div class="t" style="left:254.03px;top:669.58px;font-size:14.6px;color:#494949;font-weight:700;letter-spacing:0.7px;transform:scaleX(0.9627);">235.7</div>
<div class="t" style="left:350.45px;top:669.65px;font-size:14.4px;color:#474747;-webkit-text-stroke:0.25px #474747;letter-spacing:0.3px;transform:scaleX(0.9217);">207.0</div>
<div class="t" style="left:449.70px;top:669.72px;font-size:14.2px;color:#0ca044;font-style:italic;-webkit-text-stroke:0.35px #0ca044;letter-spacing:0.6px;transform:scaleX(0.8667);">29 $</div>
<div class="t" style="left:542.86px;top:669.58px;font-size:14.6px;color:#494949;font-weight:700;letter-spacing:0.7px;transform:scaleX(0.9627);">85.9</div>
<div class="t" style="left:656.44px;top:669.65px;font-size:14.4px;color:#474747;-webkit-text-stroke:0.25px #474747;letter-spacing:0.3px;transform:scaleX(0.9217);">77.1</div>
<div class="t" style="left:779.69px;top:669.72px;font-size:14.2px;color:#0ca044;font-style:italic;-webkit-text-stroke:0.35px #0ca044;transform:scaleX(0.8781);">9</div>
<div class="t" style="left:858.85px;top:669.65px;font-size:14.4px;color:#2f5ec2;font-style:italic;-webkit-text-stroke:0.35px #2f5ec2;transform:scaleX(0.9513);">247.1</div>
<div class="t" style="left:951.88px;top:669.65px;font-size:14.4px;color:#2f5ec2;font-style:italic;-webkit-text-stroke:0.35px #2f5ec2;transform:scaleX(0.9513);">90.0</div>
<div class="t" style="left:97.09px;top:690.24px;font-size:14.2px;color:#525252;font-weight:700;letter-spacing:0.6px;transform:scaleX(0.8360);">AVR. 24</div>
<div class="t" style="left:254.03px;top:690.10px;font-size:14.6px;color:#494949;font-weight:700;letter-spacing:0.7px;transform:scaleX(0.9627);">241.7</div>
<div class="t" style="left:350.45px;top:690.17px;font-size:14.4px;color:#474747;-webkit-text-stroke:0.25px #474747;letter-spacing:0.3px;transform:scaleX(0.9217);">206.9</div>
<div class="t" style="left:449.70px;top:690.24px;font-size:14.2px;color:#0ca044;font-style:italic;-webkit-text-stroke:0.35px #0ca044;letter-spacing:0.6px;transform:scaleX(0.8667);">35 $</div>
<div class="t" style="left:542.38px;top:690.10px;font-size:14.6px;color:#494949;font-weight:700;letter-spacing:0.7px;transform:scaleX(0.9627);">88.1</div>
<div class="t" style="left:656.44px;top:690.17px;font-size:14.4px;color:#474747;-webkit-text-stroke:0.25px #474747;letter-spacing:0.3px;transform:scaleX(0.9217);">78.4</div>
<div class="t" style="left:776.18px;top:690.24px;font-size:14.2px;color:#0ca044;font-style:italic;-webkit-text-stroke:0.35px #0ca044;transform:scaleX(0.8781);">10</div>
<div class="t" style="left:858.85px;top:690.17px;font-size:14.4px;color:#2f5ec2;font-style:italic;-webkit-text-stroke:0.35px #2f5ec2;transform:scaleX(0.9513);">259.1</div>
<div class="t" style="left:951.88px;top:690.17px;font-size:14.4px;color:#2f5ec2;font-style:italic;-webkit-text-stroke:0.35px #2f5ec2;transform:scaleX(0.9513);">94.4</div>
<div class="t" style="left:99.60px;top:710.76px;font-size:14.2px;color:#525252;font-weight:700;letter-spacing:0.6px;transform:scaleX(0.8360);">MAI 24</div>
<div class="t" style="left:253.55px;top:710.62px;font-size:14.6px;color:#494949;font-weight:700;letter-spacing:0.7px;transform:scaleX(0.9627);">254.4</div>
<div class="t" style="left:350.45px;top:710.69px;font-size:14.4px;color:#474747;-webkit-text-stroke:0.25px #474747;letter-spacing:0.3px;transform:scaleX(0.9217);">224.9</div>
<div class="t" style="left:449.70px;top:710.76px;font-size:14.2px;color:#0ca044;font-style:italic;-webkit-text-stroke:0.35px #0ca044;letter-spacing:0.6px;transform:scaleX(0.8667);">30 $</div>
<div class="t" style="left:542.38px;top:710.62px;font-size:14.6px;color:#494949;font-weight:700;letter-spacing:0.7px;transform:scaleX(0.9627);">92.8</div>
<div class="t" style="left:656.44px;top:710.69px;font-size:14.4px;color:#474747;-webkit-text-stroke:0.25px #474747;letter-spacing:0.3px;transform:scaleX(0.9217);">85.0</div>
<div class="t" style="left:779.69px;top:710.76px;font-size:14.2px;color:#0ca044;font-style:italic;-webkit-text-stroke:0.35px #0ca044;transform:scaleX(0.8781);">8</div>
<div class="t" style="left:858.38px;top:710.69px;font-size:14.4px;color:#2f5ec2;font-style:italic;-webkit-text-stroke:0.35px #2f5ec2;transform:scaleX(0.9513);">270.6</div>
<div class="t" style="left:951.88px;top:710.69px;font-size:14.4px;color:#2f5ec2;font-style:italic;-webkit-text-stroke:0.35px #2f5ec2;transform:scaleX(0.9513);">98.6</div>
<div class="t" style="left:97.09px;top:731.28px;font-size:14.2px;color:#525252;font-weight:700;letter-spacing:0.6px;transform:scaleX(0.8360);">JUIN 24</div>
<div class="t" style="left:254.03px;top:731.14px;font-size:14.6px;color:#494949;font-weight:700;letter-spacing:0.7px;transform:scaleX(0.9627);">260.5</div>
<div class="t" style="left:350.45px;top:731.21px;font-size:14.4px;color:#474747;-webkit-text-stroke:0.25px #474747;letter-spacing:0.3px;transform:scaleX(0.9217);">228.8</div>
<div class="t" style="left:451.00px;top:731.83px;font-size:12.6px;color:#0ca044;font-style:italic;-webkit-text-stroke:0.35px #0ca044;letter-spacing:0.6px;transform:scaleX(0.8667);">32 $</div>
<div class="t" style="left:542.86px;top:731.14px;font-size:14.6px;color:#494949;font-weight:700;letter-spacing:0.7px;transform:scaleX(0.9627);">95.0</div>
<div class="t" style="left:656.44px;top:731.21px;font-size:14.4px;color:#474747;-webkit-text-stroke:0.25px #474747;letter-spacing:0.3px;transform:scaleX(0.9217);">87.1</div>
<div class="t" style="left:779.69px;top:731.28px;font-size:14.2px;color:#0ca044;font-style:italic;-webkit-text-stroke:0.35px #0ca044;transform:scaleX(0.8781);">8</div>
<div class="t" style="left:858.38px;top:731.21px;font-size:14.4px;color:#2f5ec2;font-style:italic;-webkit-text-stroke:0.35px #2f5ec2;transform:scaleX(0.9513);">281.5</div>
<div class="t" style="left:948.08px;top:731.21px;font-size:14.4px;color:#2f5ec2;font-style:italic;-webkit-text-stroke:0.35px #2f5ec2;transform:scaleX(0.9513);">102.6</div>
</body></html>
